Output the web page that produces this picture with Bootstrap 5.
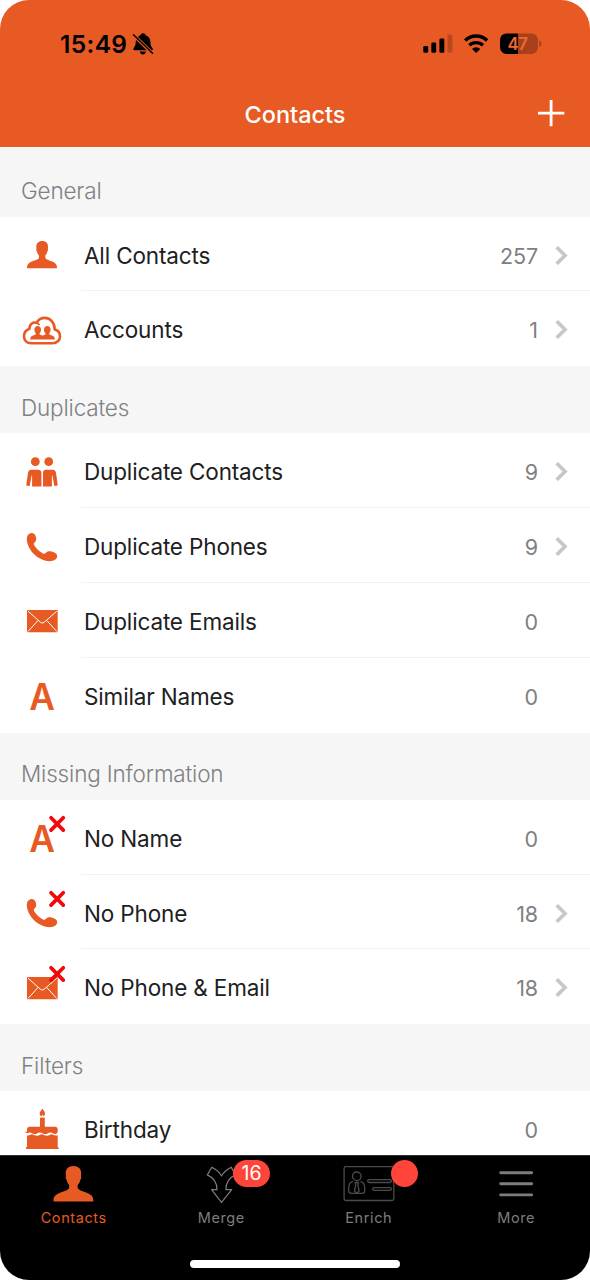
<!DOCTYPE html>
<html lang="en">
<head>
<meta charset="utf-8">
<meta name="viewport" content="width=device-width, initial-scale=1">
<title>Contacts</title>
<link href="https://cdn.jsdelivr.net/npm/bootstrap@5.3.0/dist/css/bootstrap.min.css" rel="stylesheet">
<style>
  :root { --accent: #e85a23; }
  body { font-family: Inter, "Liberation Sans", sans-serif; background: #fff; }
  .phone { width: 590px; height: 1280px; border-radius: 29px; }
  .topbar { height: 147px; background: var(--accent); }
  .status { height: 88px; padding: 0 48px 0 60px; }
  .clock { font-size: 24.5px; font-weight: 600; letter-spacing: .35px; line-height: 30px; }
  .title-row { height: 52px; }
  .page-title { font-size: 23.5px; font-weight: 500; line-height: 30px; letter-spacing: 0; padding-top: 1px; }
  .add-btn { right: 24px; top: 10px; line-height: 0; }
  .section-head { height: 67.2px; padding: 16px 21px 0; background: #f6f6f6; color: #808082; font-size: 22.5px; font-weight: 300; letter-spacing: -.17px; line-height: 30px; }
  .section-head.first { height: 69.7px; padding-top: 19px; }
  .entry { height: 74.8px; padding: 0 22px 0 18px; }
  .entry svg.ico { width: 48px; height: 48px; color: var(--accent); }
  .entry .body-col { margin-left: 15px; height: 100%; margin-right: -22px; padding: 4px 22px 0 3px; border-bottom: 1.5px solid #f3f3f3; }
  .entry:last-child .body-col { border-bottom-color: transparent; }
  .label { font-size: 22.5px; line-height: 30px; color: #202022; letter-spacing: -.15px; }
  .count { font-size: 21.5px; line-height: 30px; color: #808082; font-weight: 400; letter-spacing: -.1px; }
  .chev { width: 30px; height: 22px; }
  .tabs { height: 125px; background: #000; border-top: 1px solid #333; }
  .tab { color: #7d7d7d; font-size: 14.5px; letter-spacing: .6px; line-height: 18px; padding-top: 7px; }
  .tab.active { color: var(--accent); }
  .tab svg { width: 60px; height: 44px; margin-bottom: 1.5px; }
  .bubble { top: 4px; height: 27px; min-width: 27px; border-radius: 14px; background: #ff453a; color: #fff; font-size: 19.5px; line-height: 27px; letter-spacing: 0; }
  .bubble.wide { left: 85.5px; width: 37px; }
  .bubble.dot { left: 96px; }
  .home-bar { width: 210px; height: 8px; bottom: 12px; }
</style>
</head>
<body>
<svg class="d-none" xmlns="http://www.w3.org/2000/svg">
  <symbol id="person" viewBox="18 13 48 48">
    <path fill="currentColor" d="M42.3 24c-3.900 0-6 2.300-6 5.600 0 .9.100 1.600.200 2.200-.5.5-.3 2.200.5 2.700.3 1.900 1.100 3.100 2 4v2.300c-.8 2-3.600 2.300-6.600 3.400-3.500 1.300-5.400 3-5.400 6.200V51.300H57V50.400c0-3.200-1.900-4.900-5.400-6.200-3-1.100-5.500-1.400-6.300-3.400v-2.300c.9-.9 1.700-2.100 2-4 .8-.5 1-2.200.5-2.700.1-.6.2-1.300.2-2.200 0-3.300-1.800-5.600-5.700-5.600z"/>
  </symbol>
  <symbol id="cloud" viewBox="18 13 48 48">
    <path fill="none" stroke="currentColor" stroke-width="2.600" stroke-linejoin="round" d="M31 51.300h21.500c4.300 0 7.500-3 7.500-6.900 0-3.500-2.200-6-5.300-6.800 0-6.700-4.200-11.700-9.800-11.700-4 0-6.700 1.900-8.300 4.900-3.700-1-7.400 1.500-7.100 6-3.200 1.200-5.500 3.900-5.500 7.500 0 4 3 7 7 7z"/>
    <path fill="none" stroke="currentColor" stroke-width="1.800" d="M36.600 30.800q1.800.6 2.900 2.200"/>
    <path fill="currentColor" d="M30.300 47.400c0-3 1.300-3.300 3-3.900 1.400-.5 2.500-.7 2.800-1.700-.8-.8-1.700-1.900-1.700-4.200 0-2.300 1.400-3.500 3.300-3.500s3.300 1.200 3.300 3.500c0 2.300-.9 3.400-1.600 4.200.3 1 1.300 1.300 3.200 1.800 1.900-.5 2.800-.8 3.100-1.800-.8-.8-1.700-1.900-1.700-4.200 0-2.300 1.400-3.500 3.300-3.500s3.300 1.200 3.300 3.500c0 2.300-.9 3.400-1.600 4.200.3 1 1.300 1.200 2.800 1.700 1.700.6 3 .9 3 3.900z"/>
  </symbol>
  <symbol id="pair" viewBox="18 13 48 48">
    <g fill="currentColor">
      <circle cx="35.300" cy="27.700" r="4.400"/><circle cx="48.700" cy="27.700" r="4.400"/>
      <path d="M26.200 51.600 28 38.800c.3-2 1.500-3 3.400-3h7c1.700 0 3 1.200 3 3v13.700h-9.300V41.500h-.5l-1.900 10.500z"/>
      <path d="M57.800 51.600 56 38.800c-.3-2-1.500-3-3.400-3h-7c-1.400 0-2.600 1.200-2.600 3v13.700h8.900V41.500h.5l1.900 10.500z"/>
    </g>
  </symbol>
  <symbol id="phone" viewBox="18 13 48 48">
    <path fill="currentColor" d="M30.600 24.200c2.300-.5 4.200.7 5 2.900.9 2.300 1 4.700-.8 6.200-1.200 1-1.300 1.700-.6 2.900 2.200 3.500 5.100 6.200 8.700 8.200 1.300.7 2.100.5 3.100-.6 1.500-1.600 3.800-1.800 6.200-1.100 3 .9 5.300 2.200 5 4.800-.3 2.600-3.200 4.300-6.300 4.600-5.800.5-12-2.500-16.500-6.600C30.200 41.500 26.900 35.700 26.800 30c0-2.900 1.300-5.200 3.800-5.800z"/>
  </symbol>
  <symbol id="mail" viewBox="18 13 48 48">
    <rect x="27" y="27" width="30.700" height="22.300" rx=".8" fill="currentColor"/>
    <path fill="none" stroke="#fff" stroke-width="1" d="M28 28.200 40.500 39.300q1.800 1.600 3.600 0L56.800 28.200M28 48.500l10.200-11.200M56.800 48.500l-10.200-11.200"/>
  </symbol>
  <symbol id="letter" viewBox="18 13 48 48">
    <text x="29.200" y="51.600" font-family="Inter, sans-serif" font-weight="600" font-size="36.500" textLength="25.700" lengthAdjust="spacingAndGlyphs" fill="currentColor">A</text>
  </symbol>
  <symbol id="cross" viewBox="18 13 48 48">
    <path fill="none" stroke="#f5060a" stroke-width="3.700" stroke-linecap="round" d="M51 17.800 63.300 30.100M63.300 17.800 51 30.100"/>
  </symbol>
  <symbol id="cake" viewBox="18 13 48 48">
    <g fill="currentColor">
      <path d="M42.400 16.800c1.300 2 2.600 3 2.600 4.900 0 1.400-.9 2.500-2 2.500l-.6-2.300-.6 2.300c-1.200-.1-2.100-1.100-2.100-2.500 0-1.900 1.400-2.900 2.700-4.900z"/>
      <rect x="40" y="25.600" width="4.800" height="10"/>
      <path d="M27 40v-2.700c0-1.500 1-2.500 2.500-2.500h25.700c1.500 0 2.500 1 2.500 2.500V40q-.5 2-2.300 2t-2.500-.8q-.8-.8-2.500-.8t-2.600.8q-.9.900-2.700.9t-2.700-.9q-.8-.8-2.500-.8t-2.600.8q-.9.900-2.700.9t-2.700-.8q-.8-.8-2.300-.8t-2 .8q-2.100.1-2.600-2.100z"/>
      <path d="M27 55.300V43.300q1.500.6 3.500-.5 1.500-1 3.500.2 3 1.600 5.700 0 2-1.300 4.300 0 3 1.600 5.700 0 1.800-1.300 3.500-.2 2 1.200 4.500.5v12h1v1.700H25.900v-1.700z"/>
    </g>
  </symbol>
  <symbol id="chevron" viewBox="0 0 30 22">
    <path fill="none" stroke="#c7c7c8" stroke-width="3.700" d="M18.700 2.200 27 10.500l-8.300 8.300"/>
  </symbol>
</svg>

<div class="phone position-relative overflow-hidden d-flex flex-column">
  <header class="topbar flex-shrink-0">
    <div class="status d-flex align-items-center justify-content-between">
      <div class="d-flex align-items-center">
        <span class="clock text-black">15:49</span>
        <svg class="ms-1" width="24" height="24" viewBox="132 32 24 24">
          <path d="M144 33.300c1.800 0 2.500 1 2.700 2 3 .9 4.700 3.500 4.700 6.600 0 4.100 1.600 5 2.300 6.500.5 1.100-.1 1.900-1.400 1.900H136c-1.400 0-2-.8-1.500-1.900.7-1.500 2.200-2.400 2.200-6.500 0-3.100 1.800-5.700 4.700-6.600.2-1 1-2 2.600-2zM140.800 51.600h6.200c-.3 1.800-1.500 2.900-3.100 2.900s-2.800-1.100-3.100-2.900z"/>
          <path stroke="#e85a23" stroke-width="3.600" d="m134 34.500 20 19.500"/>
          <path stroke="#000" stroke-width="1.500" stroke-linecap="round" d="m134.500 34.700 19 18.600"/>
        </svg>
      </div>
      <svg width="120" height="24" viewBox="422 32 120 24">
        <rect x="423.300" y="46" width="4.900" height="6.800" rx="1.300"/>
        <rect x="431.300" y="42.600" width="4.900" height="10.200" rx="1.300"/>
        <rect x="439.400" y="38.600" width="4.900" height="14.200" rx="1.300"/>
        <rect x="447.500" y="34.600" width="4.900" height="18.200" rx="1.300" fill="#b9481c"/>
        <g fill="none" stroke="#000" stroke-width="3.400">
          <path d="M465.200 40.500a15.700 15.700 0 0 1 21.900 0"/>
          <path d="M469.300 45.300a10 10 0 0 1 13.700 0"/>
        </g>
        <path d="M476.150 53 472 48.900a6 6 0 0 1 8.300 0z"/>
        <path fill="#a84019" d="M518 33.400h13.500a6.400 6.400 0 0 1 6.400 6.400v7.700a6.400 6.400 0 0 1-6.400 6.400H518zM539.200 40.500a3.400 3.400 0 0 1 0 6.400z"/>
        <path d="M518 33.400h-11.600a6.400 6.400 0 0 0-6.400 6.400v7.700a6.400 6.400 0 0 0 6.400 6.400H518z"/>
        <text x="507.500" y="49.900" font-family="Inter, sans-serif" font-size="16.800" font-weight="600" textLength="20.500" fill="#ee6a33">47</text>
      </svg>
    </div>
    <div class="title-row position-relative d-flex align-items-center justify-content-center">
      <h1 class="page-title text-white mb-0">Contacts</h1>
      <a class="add-btn position-absolute" href="#" aria-label="Add">
        <svg width="30" height="30" viewBox="0 0 30 30"><path stroke="#fff" stroke-width="2.800" d="M2 15.200h26.300M15.100 2v26.300"/></svg>
      </a>
    </div>
  </header>

  <main class="flex-grow-1 overflow-hidden bg-white">
    <div class="section-head first d-flex align-items-center">General</div>
    <div>
      <div class="entry d-flex align-items-center"><svg class="ico flex-shrink-0"><use href="#person"/></svg><div class="body-col flex-grow-1 d-flex align-items-center"><span class="label me-auto">All Contacts</span><span class="count">257</span><svg class="chev"><use href="#chevron"/></svg></div></div>
      <div class="entry d-flex align-items-center"><svg class="ico flex-shrink-0"><use href="#cloud"/></svg><div class="body-col flex-grow-1 d-flex align-items-center"><span class="label me-auto">Accounts</span><span class="count">1</span><svg class="chev"><use href="#chevron"/></svg></div></div>
    </div>
    <div class="section-head d-flex align-items-center">Duplicates</div>
    <div>
      <div class="entry d-flex align-items-center"><svg class="ico flex-shrink-0"><use href="#pair"/></svg><div class="body-col flex-grow-1 d-flex align-items-center"><span class="label me-auto">Duplicate Contacts</span><span class="count">9</span><svg class="chev"><use href="#chevron"/></svg></div></div>
      <div class="entry d-flex align-items-center"><svg class="ico flex-shrink-0"><use href="#phone"/></svg><div class="body-col flex-grow-1 d-flex align-items-center"><span class="label me-auto">Duplicate Phones</span><span class="count">9</span><svg class="chev"><use href="#chevron"/></svg></div></div>
      <div class="entry d-flex align-items-center"><svg class="ico flex-shrink-0"><use href="#mail"/></svg><div class="body-col flex-grow-1 d-flex align-items-center"><span class="label me-auto">Duplicate Emails</span><span class="count">0</span><span class="chev"></span></div></div>
      <div class="entry d-flex align-items-center"><svg class="ico flex-shrink-0"><use href="#letter"/></svg><div class="body-col flex-grow-1 d-flex align-items-center"><span class="label me-auto">Similar Names</span><span class="count">0</span><span class="chev"></span></div></div>
    </div>
    <div class="section-head d-flex align-items-center">Missing Information</div>
    <div>
      <div class="entry d-flex align-items-center"><svg class="ico flex-shrink-0"><use href="#letter"/><use href="#cross"/></svg><div class="body-col flex-grow-1 d-flex align-items-center"><span class="label me-auto">No Name</span><span class="count">0</span><span class="chev"></span></div></div>
      <div class="entry d-flex align-items-center"><svg class="ico flex-shrink-0"><use href="#phone"/><use href="#cross"/></svg><div class="body-col flex-grow-1 d-flex align-items-center"><span class="label me-auto">No Phone</span><span class="count">18</span><svg class="chev"><use href="#chevron"/></svg></div></div>
      <div class="entry d-flex align-items-center"><svg class="ico flex-shrink-0"><use href="#mail"/><use href="#cross"/></svg><div class="body-col flex-grow-1 d-flex align-items-center"><span class="label me-auto">No Phone &amp; Email</span><span class="count">18</span><svg class="chev"><use href="#chevron"/></svg></div></div>
    </div>
    <div class="section-head d-flex align-items-center">Filters</div>
    <div>
      <div class="entry d-flex align-items-center"><svg class="ico flex-shrink-0"><use href="#cake"/></svg><div class="body-col flex-grow-1 d-flex align-items-center"><span class="label me-auto">Birthday</span><span class="count">0</span><span class="chev"></span></div></div>
    </div>
  </main>

  <nav class="tabs position-relative flex-shrink-0">
    <div class="row g-0">
      <div class="col tab active d-flex flex-column align-items-center">
        <svg viewBox="43.800 1163 60 44"><path fill="currentColor" d="M73.200 1166c-5 0-7.700 3-7.700 7.300 0 1.200.1 2 .3 2.900-.7.700-.4 2.800.6 3.500.4 2.500 1.400 4 2.600 5.200v2.800c-1 2.600-4.500 3.200-8.600 4.700-4.600 1.700-7.100 3.900-7.100 8v1h39.800v-1c0-4.100-2.500-6.300-7.100-8-4.100-1.500-7.500-2.100-8.500-4.700v-2.800c1.200-1.200 2.200-2.700 2.600-5.200 1-.7 1.300-2.800.6-3.500.2-.9.300-1.700.3-2.900 0-4.300-2.800-7.300-7.800-7.300z"/></svg>
        <span>Contacts</span>
      </div>
      <div class="col tab position-relative d-flex flex-column align-items-center">
        <svg viewBox="191 1163 60 44"><path fill="none" stroke="currentColor" stroke-width="1.200" stroke-linejoin="round" d="M211.800 1167.200c4.300 2 7.700 5.200 9.700 8.800 2-3.600 5.500-6.800 9.800-8.800l4.100 7.700c-6.300 2.800-9.500 7.800-9.500 14.800h5.800l-10.200 12.600-9.900-12.600h5.400c0-7-3.300-12-9.700-14.800z"/></svg>
        <span>Merge</span>
        <span class="bubble wide position-absolute text-center">16</span>
      </div>
      <div class="col tab position-relative d-flex flex-column align-items-center">
        <svg viewBox="339 1163 60 44" fill="none" stroke="#4b4b4b" stroke-width="1.300">
          <rect x="344.100" y="1166.700" width="49.700" height="33.800" rx="1.800"/>
          <circle cx="356.800" cy="1176.300" r="4.300"/>
          <path d="M353 1181.300c-3 1-4.300 3-4.300 6.500v3.500c0 1.200 1.300 2 3.500 2h9.300c2 0 3.200-.8 3.200-2v-3.500c0-3.500-1.300-5.500-4.200-6.500M355.200 1182.500h3.200l-.5 2.500 1.200 6-2.300 2.200-2.300-2.200 1.200-6z"/>
          <rect x="367.700" y="1179.700" width="23.700" height="2.800" rx="1.400"/>
          <rect x="372.700" y="1187.600" width="18.700" height="2.800" rx="1.400"/>
        </svg>
        <span>Enrich</span>
        <span class="bubble dot position-absolute"></span>
      </div>
      <div class="col tab d-flex flex-column align-items-center">
        <svg viewBox="486.300 1163 60 44"><path stroke="currentColor" stroke-width="2.900" stroke-linecap="round" d="M501 1172.700h31M501 1183.800h31M501 1194.900h31"/></svg>
        <span>More</span>
      </div>
    </div>
    <div class="home-bar bg-white rounded-pill position-absolute start-50 translate-middle-x"></div>
  </nav>
</div>
<script src="https://cdn.jsdelivr.net/npm/bootstrap@5.3.0/dist/js/bootstrap.bundle.min.js"></script>
</body>
</html>
